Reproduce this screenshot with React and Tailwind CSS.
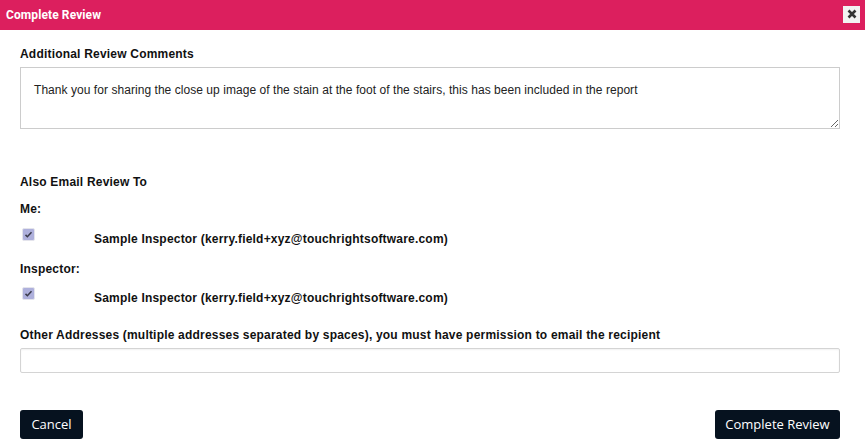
export default function App() {
  const label = "text-[12px] font-bold text-[#111] leading-[14px] tracking-[0.2px]";

  const Checked = () => (
    <span className="w-[13px] h-[13px] rounded-[2px] bg-[#aeb0dc] border border-[#e4e4ec] flex items-center justify-center shrink-0">
      <svg viewBox="0 0 12 12" className="w-[9px] h-[9px]">
        <path d="M2 6.5l2.5 2.5L10 3" fill="none" stroke="#3a3a4a" strokeWidth="2" />
      </svg>
    </span>
  );

  return (
    <div
      className="w-[865px] h-[448px] bg-white flex flex-col"
      style={{ fontFamily: '"Liberation Sans", Arial, sans-serif' }}
    >
      {/* HEADER */}
      <div className="h-[30px] bg-[#dc1f5e] flex items-center justify-between pl-[6px] pr-[5px] shrink-0">
        <span
          className="text-white text-[12px] font-bold tracking-[0.1px]"
          style={{ fontFamily: "Roboto, sans-serif" }}
        >
          Complete Review
        </span>
        <button className="w-[17px] h-[17px] bg-[#f2f2f2] flex items-center justify-center -mt-[2px]">
          <svg viewBox="0 0 10 10" className="w-[10px] h-[10px]">
            <path d="M1.5 1.5l7 7M8.5 1.5l-7 7" stroke="#333" strokeWidth="2.6" />
          </svg>
        </button>
      </div>

      {/* BODY */}
      <div className="w-[820px] ml-[20px] flex flex-col">
        <div className={`${label} mt-[17px]`}>Additional Review Comments</div>
        <textarea
          readOnly
          className="mt-[6px] w-[820px] h-[62px] border border-[#cccccc] px-[13px] pt-[15px] text-[12px] text-[#222] tracking-[0.05px] resize-y outline-none block leading-[14px]"
          defaultValue="Thank you for sharing the close up image of the stain at the foot of the stairs, this has been included in the report"
        />

        <div className={`${label} mt-[46px]`}>Also Email Review To</div>
        <div className={`${label} mt-[13px]`}>Me:</div>
        <div className="flex items-start mt-[12px]">
          <span className="ml-[2px]">
            <Checked />
          </span>
          <span className={`${label} ml-[59px] mt-[4px]`}>
            Sample Inspector (kerry.field+xyz@touchrightsoftware.com)
          </span>
        </div>
        <div className={`${label} mt-[16px]`}>Inspector:</div>
        <div className="flex items-start mt-[11px]">
          <span className="ml-[2px]">
            <Checked />
          </span>
          <span className={`${label} ml-[59px] mt-[4px]`}>
            Sample Inspector (kerry.field+xyz@touchrightsoftware.com)
          </span>
        </div>

        <div className={`${label} mt-[23px]`}>
          Other Addresses (multiple addresses separated by spaces), you must have
          permission to email the recipient
        </div>
        <input
          className="mt-[6px] w-[820px] h-[25px] border border-[#d4d4d4] rounded-[2px] outline-none shadow-[inset_0_1px_2px_rgba(0,0,0,0.06)]"
          readOnly
        />

        <div
          className="flex justify-between mt-[37px]"
          style={{ fontFamily: '"Open Sans", sans-serif' }}
        >
          <button className="h-[29px] w-[63px] bg-[#06121f] text-white text-[13px] rounded-[3px]">
            Cancel
          </button>
          <button className="h-[29px] w-[125px] bg-[#06121f] text-white text-[13px] rounded-[3px]">
            Complete Review
          </button>
        </div>
      </div>
    </div>
  );
}
